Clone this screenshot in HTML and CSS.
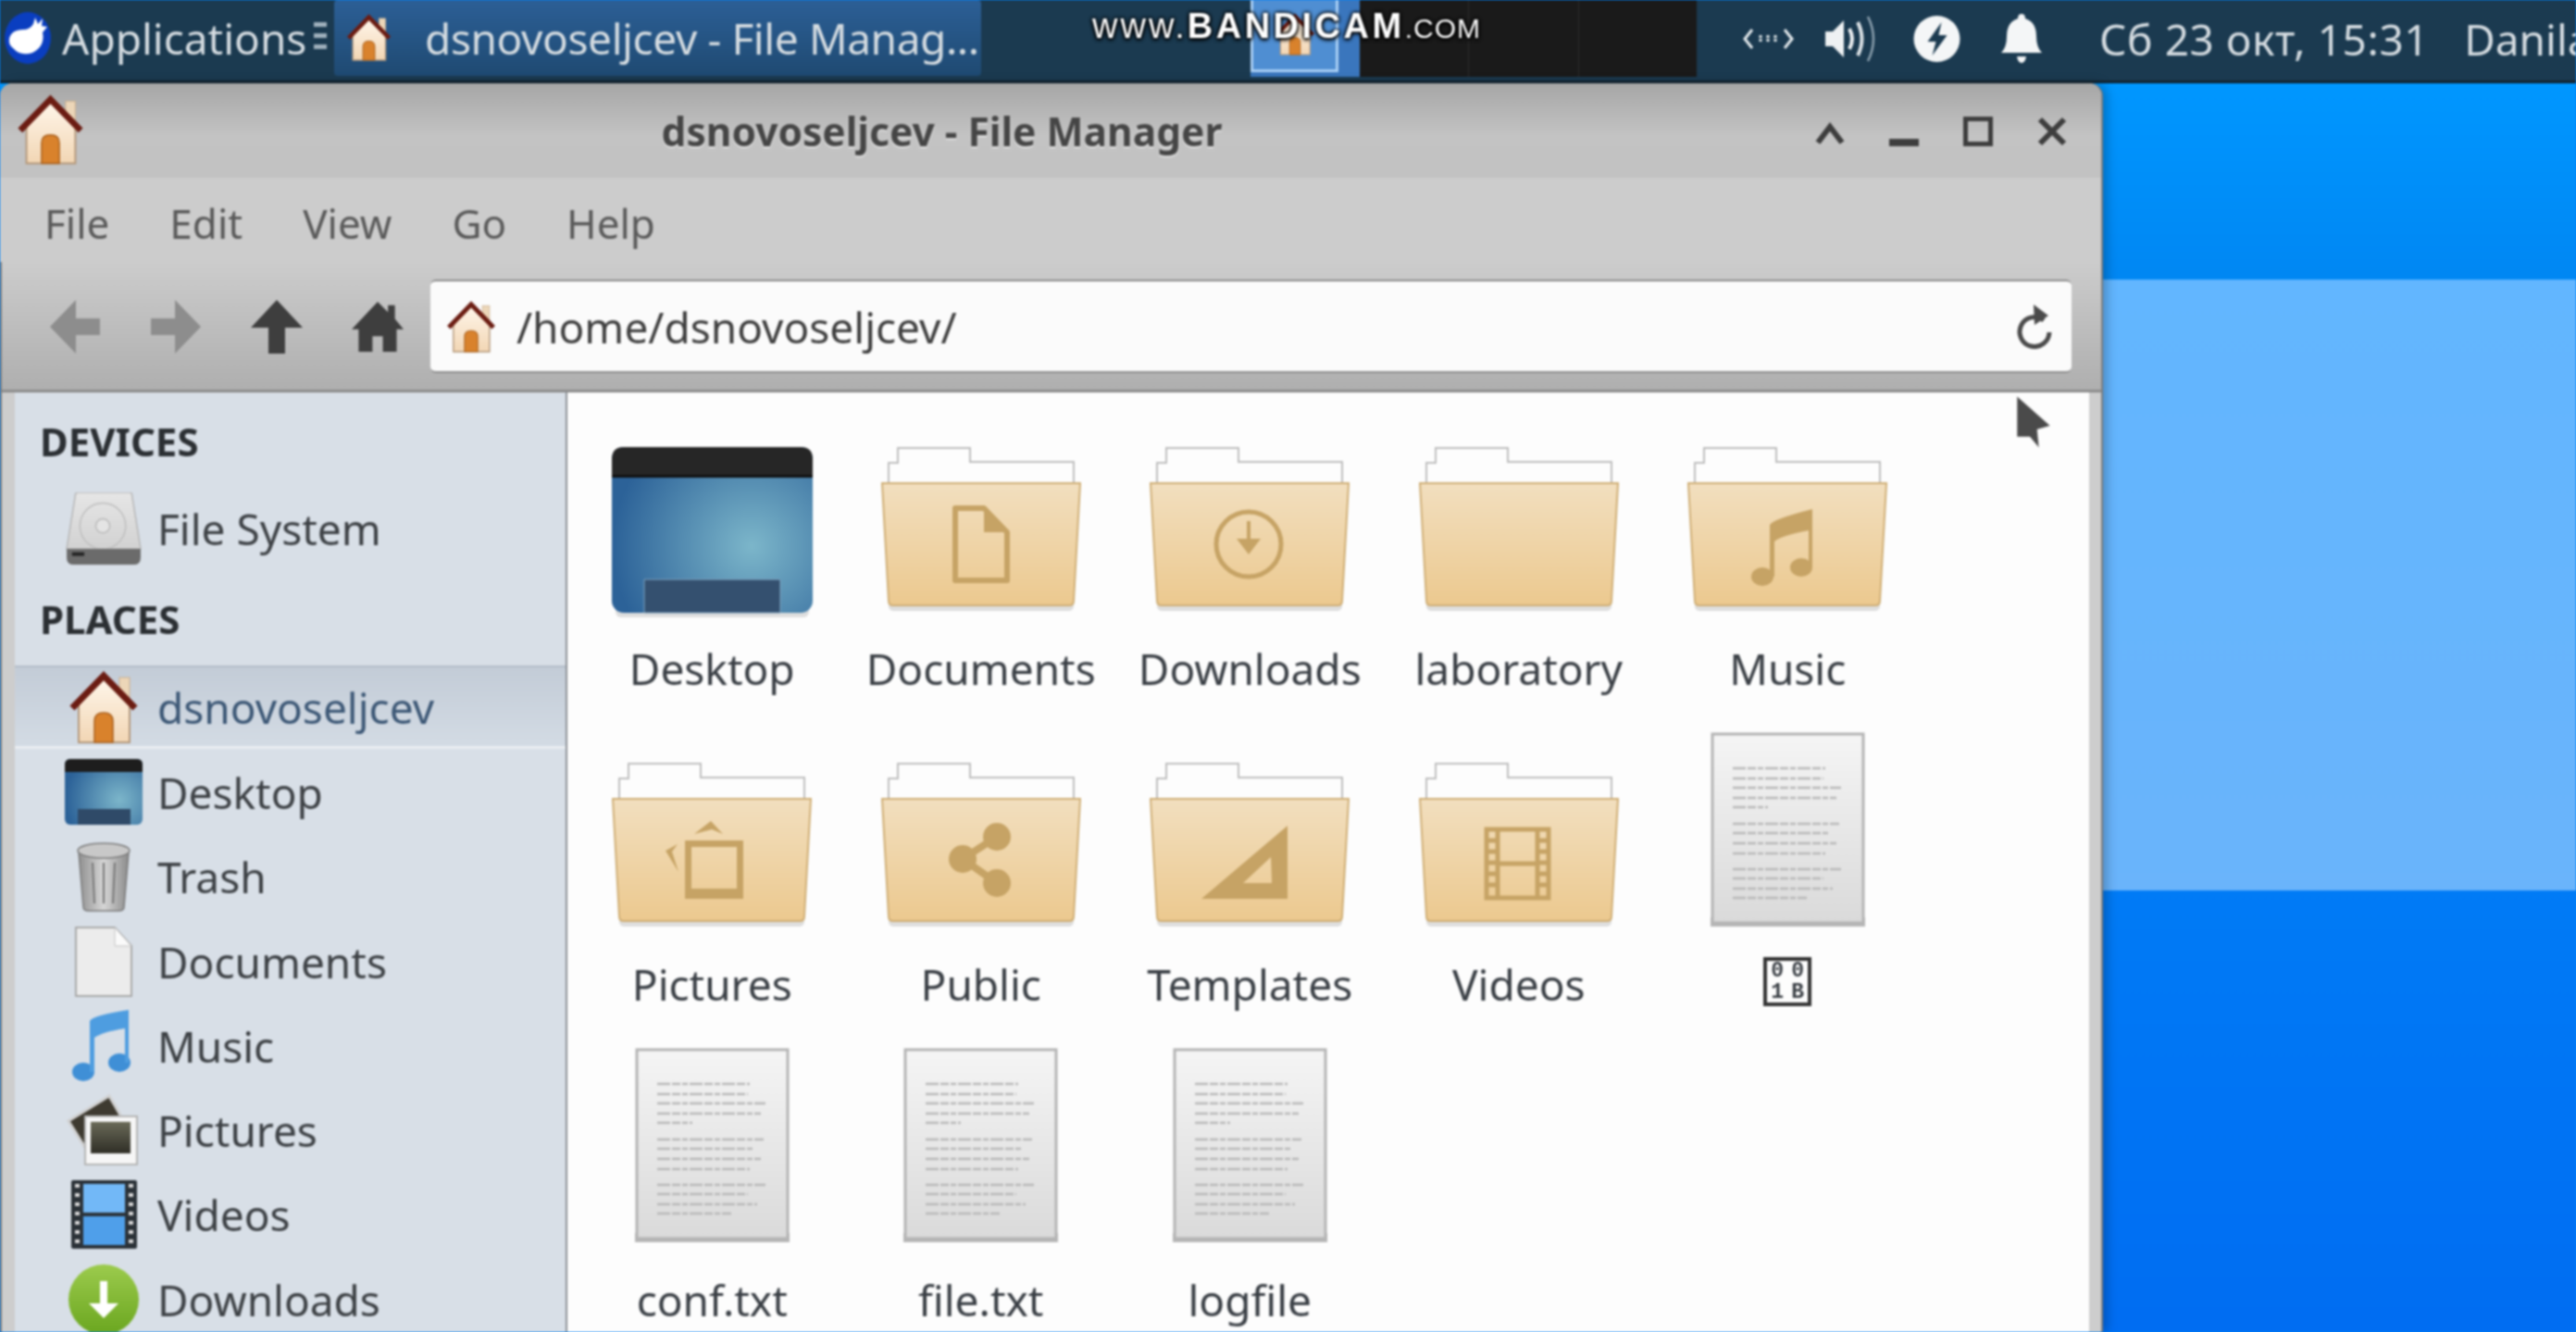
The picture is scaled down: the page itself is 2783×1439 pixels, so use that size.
FILE: index.html

```html
<!DOCTYPE html>
<html lang="en">
<head>
    <meta charset="UTF-8">
    <meta name="viewport" content="width=device-width, initial-scale=1.0">
    <title>dsnovoseljcev - File Manager</title>
    <link rel="stylesheet" href="styles.css">
</head>
<body>
    <!-- shared icons -->
    <svg class="defs" width="0" height="0">
        <defs>
            <linearGradient id="gFolder" x1="0" y1="0" x2="0" y2="1">
                <stop offset="0" stop-color="#f2dfbf"/>
                <stop offset="1" stop-color="#ecc98f"/>
            </linearGradient>
            <linearGradient id="gDoc" x1="0" y1="0" x2="0" y2="1">
                <stop offset="0" stop-color="#f5f5f5"/>
                <stop offset="1" stop-color="#dadada"/>
            </linearGradient>
            <linearGradient id="gWall" x1="0" y1="0" x2="0" y2="1">
                <stop offset="0" stop-color="#fff6ea"/>
                <stop offset="1" stop-color="#f2d6b4"/>
            </linearGradient>
            <linearGradient id="gHdd" x1="0" y1="0" x2="0" y2="1">
                <stop offset="0" stop-color="#e6e6e6"/>
                <stop offset="1" stop-color="#d2d2d2"/>
            </linearGradient>
            <linearGradient id="gTrash" x1="0" y1="0" x2="1" y2="0">
                <stop offset="0" stop-color="#8f8f8f"/>
                <stop offset="0.5" stop-color="#d6d6d6"/>
                <stop offset="1" stop-color="#8a8a8a"/>
            </linearGradient>
            <linearGradient id="gGreen" x1="0" y1="0" x2="0" y2="1">
                <stop offset="0" stop-color="#9ccb4d"/>
                <stop offset="1" stop-color="#6aa61f"/>
            </linearGradient>
            <linearGradient id="gPhoto" x1="0" y1="0" x2="0" y2="1">
                <stop offset="0" stop-color="#6a6a58"/>
                <stop offset="1" stop-color="#2f2e26"/>
            </linearGradient>
            <radialGradient id="gDesk" gradientUnits="userSpaceOnUse" cx="151" cy="107" r="150">
                <stop offset="0" stop-color="#7cb6ca"/>
                <stop offset="1" stop-color="#2c6298"/>
            </radialGradient>
            <radialGradient id="gDeskSm" gradientUnits="userSpaceOnUse" cx="59" cy="44" r="58">
                <stop offset="0" stop-color="#7cb6ca"/>
                <stop offset="1" stop-color="#2c6298"/>
            </radialGradient>

            <symbol id="home" viewBox="0 0 76 78">
                <rect x="55" y="7" width="11" height="24" fill="#ecd6b8" stroke="#c9ad8c" stroke-width="1"/>
                <path d="M11 34 L38 8 L66 34 V77 H11 Z" fill="url(#gWall)" stroke="#b3977a" stroke-width="2"/>
                <path d="M28 77 V54 Q28 45 38 45 Q48 45 48 54 V77 Z" fill="#d9822c" stroke="#a9601e" stroke-width="1.5"/>
                <path d="M4 40 L38 5 L72 40" fill="none" stroke="#6b1c12" stroke-width="7" stroke-linejoin="miter"/>
            </symbol>

            <symbol id="folder" viewBox="0 0 216 179">
                <rect x="8" y="164" width="200" height="13" rx="5" fill="#000" opacity="0.12"/>
                <path d="M8 40 V17 H18 V1 H96 V16 H208 V40 Z" fill="#fdfdfd" stroke="#bdbdbd" stroke-width="2"/>
                <path d="M1 39 H215 L208 166 Q208 171 203 171 H13 Q8 171 8 166 Z" fill="url(#gFolder)" stroke="#cfae75" stroke-width="2"/>
            </symbol>
            <symbol id="emb-doc" viewBox="0 0 216 179">
                <path d="M80 66 H111 L136 92 V144 H80 Z" fill="none" stroke="#c6a365" stroke-width="6" stroke-linejoin="round"/>
                <path d="M111 66 L136 92 H111 Z" fill="#c6a365"/>
            </symbol>
            <symbol id="emb-down" viewBox="0 0 216 179">
                <circle cx="107" cy="105" r="35" fill="none" stroke="#c6a365" stroke-width="5"/>
                <path d="M105 80 h4 v19 h11 l-13 17 l-13 -17 h11 Z" fill="#c6a365"/>
            </symbol>
            <symbol id="emb-music" viewBox="0 0 216 179">
                <ellipse cx="81" cy="140" rx="12" ry="10" fill="#c6a365"/>
                <ellipse cx="123" cy="130" rx="12" ry="10" fill="#c6a365"/>
                <path d="M89 140 V84 Q92 78 135 67 V130 H131 V90 Q100 96 94 102 V140 Z" fill="#c6a365"/>
            </symbol>
            <symbol id="emb-pictures" viewBox="0 0 216 179">
                <path d="M79 84 H142 V147 H79 Z M86 91 V136 H135 V91 Z" fill="#c6a365" fill-rule="evenodd"/>
                <path d="M89 77 L107 63 L120 77 L108 72 Z" fill="#c6a365"/>
                <path d="M71 88 L58 95 L72 118 L65 96 Z" fill="#c6a365"/>
            </symbol>
            <symbol id="emb-share" viewBox="0 0 216 179">
                <path d="M125 80 L88 104 L125 130" fill="none" stroke="#c6a365" stroke-width="8"/>
                <circle cx="125" cy="80" r="15" fill="#c6a365"/>
                <circle cx="88" cy="104" r="15" fill="#c6a365"/>
                <circle cx="125" cy="130" r="15" fill="#c6a365"/>
            </symbol>
            <symbol id="emb-templates" viewBox="0 0 216 179">
                <path d="M149 68 V147 H56 Z M131 102 L101 130 H132 Z" fill="#c6a365" fill-rule="evenodd"/>
            </symbol>
            <symbol id="emb-film" viewBox="0 0 216 179">
                <g fill="none" stroke="#c6a365" stroke-width="5">
                    <rect x="73" y="72" width="67" height="74"/>
                    <path d="M85 72 V146 M128 72 V146 M85 109 H128 M73 84 H85 M73 96 H85 M73 108 H85 M73 120 H85 M73 132 H85 M128 84 H140 M128 96 H140 M128 108 H140 M128 120 H140 M128 132 H140"/>
                </g>
            </symbol>

            <symbol id="textdoc" viewBox="0 0 167 212">
                <rect x="0" y="200" width="167" height="10" fill="#000" opacity="0.28"/>
                <rect x="2" y="2" width="163" height="204" fill="url(#gDoc)" stroke="#b4b4b4" stroke-width="3"/>
                <g stroke="#b9b9b9" stroke-width="2.500" stroke-dasharray="14 2 9 2 6 2" fill="none">
                    <path d="M24 39 H124 M24 50 H122 M24 60 H141 M24 71 H136 M24 81 H62"/>
                    <path d="M24 99 H139 M24 109 H129 M24 120 H136 M24 131 H124"/>
                    <path d="M24 148 H141 M24 158 H122 M24 169 H132 M24 179 H104"/>
                </g>
            </symbol>

            <symbol id="desktop-big" viewBox="0 0 217 186">
                <rect x="4" y="172" width="209" height="12" rx="6" fill="#000" opacity="0.12"/>
                <rect x="0" y="0" width="217" height="179" rx="13" fill="url(#gDesk)"/>
                <path d="M0 32 V13 Q0 0 13 0 H204 Q217 0 217 13 V32 Z" fill="#262626"/>
                <rect x="0" y="30" width="217" height="3" fill="#111"/>
                <path d="M35 143 H182 V179 H35 Z" fill="#34506f" stroke="#7fa3c0" stroke-width="1"/>
            </symbol>
            <symbol id="desktop-small" viewBox="0 0 84 72">
                <rect x="0" y="0" width="84" height="71" rx="6" fill="url(#gDeskSm)"/>
                <path d="M0 14 V6 Q0 0 6 0 H78 Q84 0 84 6 V14 Z" fill="#1d1d1d"/>
                <path d="M14 54 H71 V71 H14 Z" fill="#2f4a68"/>
            </symbol>
        </defs>
    </svg>

    <div class="screen">
        <!-- top panel -->
        <div class="panel">
            <svg class="app-logo" viewBox="0 0 50 56">
                <ellipse cx="25" cy="28" rx="25" ry="28" fill="#0a3ec0"/>
                <path d="M5 29 Q7 19 20 19 Q27 19 31 13 L33 6 L36 13 L41 7 L40 15 L46 16 L41 22 Q44 37 30 44 Q17 48 9 39 Q4 35 5 29 Z" fill="#fff"/>
            </svg>
            <span class="panel-text app-label">Applications</span>
            <span class="panel-grip"></span>
            <div class="task">
                <svg class="task-icon"><use href="#home"/></svg>
                <span class="panel-text task-text">dsnovoseljcev - File Manag...</span>
            </div>
            <div class="pager">
                <div class="ws ws-active">
                    <div class="ws-win"><svg class="ws-icon"><use href="#home"/></svg></div>
                </div>
                <div class="ws ws-2"></div>
                <div class="ws ws-3"></div>
                <div class="ws ws-4"></div>
            </div>
            <div class="tray">
                <svg class="tray-net" viewBox="0 0 57 24">
                    <path d="M11 2 L3 12 L11 22 M46 2 L54 12 L46 22" fill="none" stroke="#e6ebee" stroke-width="3"/>
                    <path d="M20 8 V16 M28 8 V16 M36 8 V16" stroke="#e6ebee" stroke-width="3" stroke-dasharray="3 1"/>
                </svg>
                <svg class="tray-vol" viewBox="0 0 55 50">
                    <path d="M0 17 H8 L20 5 V45 L8 33 H0 Z" fill="#eef1f3"/>
                    <path d="M26 14 Q32 25 26 36" fill="none" stroke="#eef1f3" stroke-width="4"/>
                    <path d="M35 7 Q44 25 35 43" fill="none" stroke="#dde3e7" stroke-width="4"/>
                    <path d="M46 1 Q58 25 46 49" fill="none" stroke="#8ea2b0" stroke-width="2.5"/>
                </svg>
                <svg class="tray-power" viewBox="0 0 50 50">
                    <circle cx="25" cy="25" r="25" fill="#f4f6f7"/>
                    <path d="M30 7 L15 28 H24 L20 43 L36 21 H27 Z" fill="#1b3a50"/>
                </svg>
                <svg class="tray-bell" viewBox="0 0 44 53">
                    <path d="M22 0 Q26 0 26 5 Q38 9 38 24 Q38 36 44 42 H0 Q6 36 6 24 Q6 9 18 5 Q18 0 22 0 Z" fill="#f4f6f7"/>
                    <path d="M17 46 H27 Q26 53 22 53 Q18 53 17 46 Z" fill="#f4f6f7"/>
                </svg>
                <span class="panel-text clock">Сб 23 окт, 15:31</span>
                <span class="panel-text user">Danila</span>
            </div>
            <div class="watermark">www.<b>BANDICAM</b><small>.COM</small></div>
        </div>

        <div class="desktop">
            <div class="window">
                <div class="titlebar">
                    <svg class="title-icon"><use href="#home"/></svg>
                    <div class="title">dsnovoseljcev - File Manager</div>
                    <div class="win-buttons">
                        <svg viewBox="0 0 32 32"><path d="M3 28 L16 11 L29 28" fill="none" stroke="#3d3d3d" stroke-width="6"/></svg>
                        <svg viewBox="0 0 32 32"><rect x="0" y="24" width="32" height="8" fill="#3d3d3d"/></svg>
                        <svg viewBox="0 0 32 32"><rect x="2.5" y="2.5" width="27" height="27" fill="none" stroke="#3d3d3d" stroke-width="5"/></svg>
                        <svg viewBox="0 0 32 32"><path d="M3 3 L29 29 M29 3 L3 29" fill="none" stroke="#3d3d3d" stroke-width="6"/></svg>
                    </div>
                </div>

                <div class="menubar">
                    <span>File</span>
                    <span>Edit</span>
                    <span>View</span>
                    <span>Go</span>
                    <span>Help</span>
                </div>

                <div class="toolbar">
                    <div class="tool-btn">
                        <svg viewBox="0 0 56 58"><path d="M0 29 L28 0 V20 H54 V38 H28 V58 Z" fill="#8d8d8d"/></svg>
                    </div>
                    <div class="tool-btn">
                        <svg viewBox="0 0 56 58"><path d="M54 29 L26 0 V20 H0 V38 H26 V58 Z" fill="#8d8d8d"/></svg>
                    </div>
                    <div class="tool-btn">
                        <svg viewBox="0 0 56 58"><path d="M28 0 L56 30 H37 V58 H19 V30 H0 Z" fill="#3e3e3e"/></svg>
                    </div>
                    <div class="tool-btn">
                        <svg viewBox="0 0 60 58"><path d="M30 0 L42 12 V4 H50 V20 L60 32 H52 V58 H36 V40 H24 V58 H8 V32 H0 Z" fill="#3e3e3e"/></svg>
                    </div>
                    <div class="location">
                        <svg class="loc-icon"><use href="#home"/></svg>
                        <span class="loc-text">/home/dsnovoseljcev/</span>
                        <svg class="loc-reload" viewBox="0 0 40 48">
                            <path d="M30 17 A16 16 0 1 0 36 30" fill="none" stroke="#4a4a4a" stroke-width="5"/>
                            <path d="M19 0 L35 12 L20 22 Z" fill="#4a4a4a"/>
                        </svg>
                    </div>
                </div>

                <div class="content">
                    <div class="sidebar">
                        <div class="side-head first">DEVICES</div>
                        <div class="side-row">
                            <svg class="side-icon" viewBox="0 0 84 82">
                                <path d="M10 2 Q10 0 13 0 H71 Q74 0 74 2 L84 64 H0 Z" fill="url(#gHdd)" stroke="#b5b5b5" stroke-width="1.5"/>
                                <circle cx="41" cy="38" r="26" fill="none" stroke="#bdbdbd" stroke-width="1.5"/>
                                <circle cx="41" cy="38" r="8" fill="#e4e4e4" stroke="#b8b8b8" stroke-width="1.5"/>
                                <path d="M0 64 H84 V74 Q84 82 76 82 H8 Q0 82 0 74 Z" fill="#6b6b6b"/>
                                <rect x="6" y="68" width="14" height="4" fill="#222"/>
                            </svg>
                            <span>File System</span>
                        </div>
                        <div class="side-head places">PLACES</div>
                        <div class="side-row selected">
                            <svg class="side-icon"><use href="#home"/></svg>
                            <span>dsnovoseljcev</span>
                        </div>
                        <div class="side-row">
                            <svg class="side-icon"><use href="#desktop-small"/></svg>
                            <span>Desktop</span>
                        </div>
                        <div class="side-row">
                            <svg class="side-icon" viewBox="0 0 84 74">
                                <path d="M15 11 H69 L64 70 Q64 74 58 74 H26 Q20 74 20 70 Z" fill="url(#gTrash)" stroke="#7c7c7c" stroke-width="1.5"/>
                                <ellipse cx="42" cy="9" rx="28" ry="8" fill="#c8c8c8" stroke="#7c7c7c" stroke-width="1.5"/>
                                <path d="M30 22 L32 66 M42 22 V66 M54 22 L52 66" stroke="#777" stroke-width="2"/>
                            </svg>
                            <span>Trash</span>
                        </div>
                        <div class="side-row">
                            <svg class="side-icon" viewBox="0 0 84 76">
                                <path d="M12 1 H54 L72 21 V75 H12 Z" fill="#ececec" stroke="#a9a9a9" stroke-width="2"/>
                                <path d="M54 1 V21 H72 Z" fill="#fafafa" stroke="#c4c4c4" stroke-width="1"/>
                            </svg>
                            <span>Documents</span>
                        </div>
                        <div class="side-row">
                            <svg class="side-icon" viewBox="0 0 84 78">
                                <ellipse cx="20" cy="67" rx="12" ry="10" fill="#3f8fd6"/>
                                <ellipse cx="59" cy="57" rx="12" ry="10" fill="#3f8fd6"/>
                                <path d="M27 67 V12 Q30 6 69 0 V57 H65 V20 Q40 24 32 30 V67 Z" fill="#4e9de0"/>
                            </svg>
                            <span>Music</span>
                        </div>
                        <div class="side-row">
                            <svg class="side-icon" viewBox="0 0 84 76">
                                <path d="M4 28 L48 1 L66 32 L24 60 Z" fill="#3e3a30" stroke="#d0d0d0" stroke-width="3"/>
                                <rect x="22" y="23" width="56" height="52" fill="#f6f6f6" stroke="#b4b4b4" stroke-width="2"/>
                                <rect x="28" y="29" width="43" height="34" fill="url(#gPhoto)"/>
                            </svg>
                            <span>Pictures</span>
                        </div>
                        <div class="side-row">
                            <svg class="side-icon" viewBox="0 0 84 74">
                                <rect x="7" y="0" width="71" height="74" rx="2" fill="#2b3238"/>
                                <rect x="20" y="4" width="45" height="31" fill="#72b8f7"/>
                                <rect x="20" y="39" width="45" height="31" fill="#4f9fea"/>
                                <path d="M13.500 4 V70 M71.500 4 V70" stroke="#d8d8d8" stroke-width="5" stroke-dasharray="4 6"/>
                            </svg>
                            <span>Videos</span>
                        </div>
                        <div class="side-row">
                            <svg class="side-icon" viewBox="0 0 84 76">
                                <circle cx="42" cy="38" r="38" fill="url(#gGreen)"/>
                                <path d="M38 18 H46 V42 H58 L42 58 L26 42 H38 Z" fill="#fff"/>
                            </svg>
                            <span>Downloads</span>
                        </div>
                    </div>

                    <div class="main">
                        <div class="item">
                            <div class="item-icon"><svg class="ic-desktop"><use href="#desktop-big"/></svg></div>
                            <div class="item-label">Desktop</div>
                        </div>
                        <div class="item">
                            <div class="item-icon"><svg class="ic-folder"><use href="#folder"/><use href="#emb-doc"/></svg></div>
                            <div class="item-label">Documents</div>
                        </div>
                        <div class="item">
                            <div class="item-icon"><svg class="ic-folder"><use href="#folder"/><use href="#emb-down"/></svg></div>
                            <div class="item-label">Downloads</div>
                        </div>
                        <div class="item">
                            <div class="item-icon"><svg class="ic-folder"><use href="#folder"/></svg></div>
                            <div class="item-label">laboratory</div>
                        </div>
                        <div class="item">
                            <div class="item-icon"><svg class="ic-folder"><use href="#folder"/><use href="#emb-music"/></svg></div>
                            <div class="item-label">Music</div>
                        </div>

                        <div class="item">
                            <div class="item-icon"><svg class="ic-folder"><use href="#folder"/><use href="#emb-pictures"/></svg></div>
                            <div class="item-label">Pictures</div>
                        </div>
                        <div class="item">
                            <div class="item-icon"><svg class="ic-folder"><use href="#folder"/><use href="#emb-share"/></svg></div>
                            <div class="item-label">Public</div>
                        </div>
                        <div class="item">
                            <div class="item-icon"><svg class="ic-folder"><use href="#folder"/><use href="#emb-templates"/></svg></div>
                            <div class="item-label">Templates</div>
                        </div>
                        <div class="item">
                            <div class="item-icon"><svg class="ic-folder"><use href="#folder"/><use href="#emb-film"/></svg></div>
                            <div class="item-label">Videos</div>
                        </div>
                        <div class="item">
                            <div class="item-icon"><svg class="ic-doc"><use href="#textdoc"/></svg></div>
                            <div class="item-label">
                                <div class="tofu"><span>0</span><span>0</span><span>1</span><span>B</span></div>
                            </div>
                        </div>

                        <div class="item">
                            <div class="item-icon"><svg class="ic-doc"><use href="#textdoc"/></svg></div>
                            <div class="item-label">conf.txt</div>
                        </div>
                        <div class="item">
                            <div class="item-icon"><svg class="ic-doc"><use href="#textdoc"/></svg></div>
                            <div class="item-label">file.txt</div>
                        </div>
                        <div class="item">
                            <div class="item-icon"><svg class="ic-doc"><use href="#textdoc"/></svg></div>
                            <div class="item-label">logfile</div>
                        </div>
                    </div>
                </div>

                <svg class="cursor" viewBox="0 0 40 62">
                    <path d="M2 2 L38 34 L24 38 L26 58 L16 46 L2 46 Z" fill="#4a4a4a" stroke="#fff" stroke-width="1" stroke-opacity="0.5"/>
                </svg>
            </div>
        </div>
    </div>
</body>
</html>
```

FILE: styles.css

```css
html, body {
    margin: 0;
    padding: 0;
    height: 100%;
    overflow: hidden;
    background: #0080f5;
}

.defs {
    position: absolute;
}

/* the capture is an upscaled video frame, everything is a bit soft */
.screen {
    width: 2783px;
    height: 1439px;
    display: flex;
    flex-direction: column;
    overflow: hidden;
    font-family: "Noto Sans", sans-serif;
    font-size: 46px;
    filter: blur(1.1px);
}

/* ---- panel ---- */
.panel {
    position: relative;
    flex: 0 0 90px;
    box-sizing: border-box;
    height: 90px;
    padding-bottom: 4px;
    display: flex;
    align-items: stretch;
    background: #1b3a50;
    border-bottom: 3px solid #10222f;
    white-space: nowrap;
}

.panel > * {
    flex: none;
}

.panel-text {
    color: #d5dce1;
    font-size: 46px;
    line-height: 82px;
}

.app-logo {
    width: 50px;
    height: 56px;
    margin: 13px 0 0 5px;
}

.app-label {
    width: 261px;
    margin-left: 12px;
}

.panel-grip {
    width: 14px;
    height: 34px;
    margin: 24px 8px 0 11px;
    background: repeating-linear-gradient(to bottom, #9fb0bc 0 5px, transparent 5px 12px);
}

.task {
    width: 699px;
    display: flex;
    background: linear-gradient(to bottom, #2c5f96, #1f4a72);
    border-radius: 4px;
    margin-bottom: 1px;
}

.task-icon {
    width: 49px;
    height: 55px;
    flex: none;
    margin: 13px 36px 0 13px;
}

.task-text {
    letter-spacing: -0.4px;
}

.pager {
    width: 482px;
    margin-left: 291px;
    display: flex;
    background: #1a1a1a;
}

.ws {
    flex: none;
    box-sizing: border-box;
    border-right: 1px solid #2c2c2c;
}

.ws-active {
    width: 118px;
    background: #3a76bd;
    border-right: none;
}

.ws-win {
    width: 95px;
    height: 78px;
    box-sizing: border-box;
    background: #4f8ed2;
    border: 3px solid #a9cff5;
    border-top: none;
    display: flex;
    justify-content: center;
}

.ws-icon {
    width: 44px;
    height: 50px;
    margin-top: 12px;
}

.ws-2 {
    width: 118px;
}

.ws-3 {
    width: 119px;
}

.ws-4 {
    width: 127px;
    border-right: none;
}

.tray {
    display: flex;
    align-items: center;
    margin-left: 49px;
}

.tray > * {
    flex: none;
}

.tray-net {
    width: 57px;
    height: 24px;
}

.tray-vol {
    width: 55px;
    height: 50px;
    margin-left: 33px;
}

.tray-power {
    width: 51px;
    height: 50px;
    margin-left: 40px;
}

.tray-bell {
    width: 44px;
    height: 53px;
    margin-left: 44px;
}

.clock {
    margin-left: 62px;
    letter-spacing: 0.6px;
}

.user {
    margin-left: 38px;
}

/* recorder watermark sits over the panel */
.watermark {
    position: absolute;
    left: 1180px;
    top: 6px;
    color: #fff;
    font-family: "Liberation Sans", sans-serif;
    font-size: 38px;
    letter-spacing: 3px;
    line-height: 44px;
    text-shadow: 0 0 4px #000, 0 0 4px #000, 0 2px 4px #000;
}

.watermark b {
    font-size: 38px;
    letter-spacing: 3.5px;
}

.watermark small {
    font-size: 30px;
    font-weight: normal;
    letter-spacing: 1px;
}

/* ---- desktop ---- */
.desktop {
    flex: 1;
    min-height: 0;
    background: linear-gradient(to bottom, #0097ff 0, #0087f3 212px, #62b6ff 212px, #6ab4fb 872px, #007bf6 872px, #006df2 100%);
}

.window {
    position: relative;
    width: 2270px;
    height: 100%;
    display: flex;
    flex-direction: column;
    background: #cdcdcd;
    border-radius: 14px 14px 0 0;
    box-shadow: 2px 0 0 #7d7d7d, 6px 0 12px rgba(0, 0, 0, 0.25), inset 2px 0 0 #7d7d7d;
}

.titlebar {
    flex: 0 0 102px;
    display: flex;
    align-items: center;
    padding: 0 37px 0 18px;
    border-radius: 14px 14px 0 0;
    background: linear-gradient(to bottom, #a6a6a6, #c3c3c3 55%, #c2c2c2);
}

.title-icon {
    width: 73px;
    height: 76px;
    flex: none;
    margin-top: -2px;
}

.title {
    flex: 1;
    padding-right: 17px;
    text-align: center;
    color: #454545;
    font-size: 42.500px;
    font-weight: bold;
    text-shadow: 0 2px 2px rgba(255, 255, 255, 0.5);
}

.win-buttons {
    display: flex;
    gap: 48px;
    margin-top: 2px;
}

.win-buttons svg {
    width: 32px;
    height: 32px;
}

.menubar {
    flex: 0 0 91px;
    box-sizing: border-box;
    display: flex;
    align-items: center;
    padding: 7px 0 0 48px;
    background: #cccccc;
    color: #5a5a5a;
    font-size: 44px;
}

.menubar span {
    margin-right: 65px;
}

.toolbar {
    flex: 0 0 141px;
    box-sizing: border-box;
    display: flex;
    padding: 19px 32px 18px 26px;
    margin-left: 2px;
    background: linear-gradient(to bottom, #cccccc, #afafaf);
    border-bottom: 3px solid #8c8c8c;
}

.tool-btn {
    width: 108.500px;
    display: flex;
    align-items: center;
    justify-content: center;
}

.tool-btn svg {
    width: 56px;
    height: 58px;
}

.location {
    flex: 1;
    margin-left: 3px;
    display: flex;
    align-items: center;
    padding: 0 20px 0 17px;
    background: #fbfbfb;
    border-radius: 6px;
    border-top: 2px solid #8b8b8b;
    border-bottom: 2px solid #8f8f8f;
    box-sizing: border-box;
}

.loc-icon {
    width: 54px;
    height: 56px;
    flex: none;
}

.loc-text {
    flex: 1;
    margin-left: 22px;
    color: #3f3f3f;
    font-size: 46px;
}

.loc-reload {
    width: 40px;
    height: 48px;
}

/* ---- content ---- */
.content {
    flex: 1;
    min-height: 0;
    display: flex;
    margin: 0 13px 0 16px;
    overflow: hidden;
}

.sidebar {
    width: 595px;
    flex: none;
    padding-top: 7px;
    background: #d8dfe7;
    border-right: 2px solid #8b8f94;
    color: #3d4145;
}

.side-head {
    height: 91px;
    line-height: 91px;
    padding-left: 27px;
    font-size: 42px;
    font-weight: bold;
    color: #2b2f33;
}

.side-head.first {
    margin-bottom: 3px;
}

.side-head.places {
    margin-top: 7px;
    margin-bottom: 5px;
}

.side-row {
    height: 91.300px;
    display: flex;
    align-items: center;
    gap: 16px;
    padding-left: 54px;
}

.side-row.selected {
    height: 90px;
    margin-bottom: 1px;
    background: linear-gradient(to bottom, #c3ccd7, #d3dbe4);
    border-top: 2px solid #b4bdc8;
    border-bottom: 3px solid #e9edf1;
    box-sizing: border-box;
    color: #3d5876;
}

.side-icon {
    width: 84px;
    height: 78px;
    flex: none;
}

.main {
    flex: 1;
    display: grid;
    grid-template-columns: repeat(5, 290.500px);
    grid-auto-rows: 300px;
    row-gap: 41px;
    align-content: start;
    padding: 29px 0 0 11px;
    background: #fdfdfd;
    color: #3a3f45;
}

.item {
    display: flex;
    flex-direction: column;
    align-items: center;
}

.item-icon {
    height: 209px;
    display: flex;
    align-items: flex-end;
    justify-content: center;
}

.ic-folder {
    width: 216px;
    height: 179px;
}

.ic-desktop {
    width: 217px;
    height: 186px;
    margin-bottom: -7px;
}

.ic-doc {
    width: 167px;
    height: 212px;
}

.item-label {
    height: 62px;
    line-height: 62px;
    margin-top: 29px;
}

.tofu {
    width: 52px;
    height: 53px;
    box-sizing: border-box;
    margin-top: 2px;
    border: 4px solid #333;
    display: grid;
    grid-template-columns: 1fr 1fr;
    justify-items: center;
    align-items: center;
    font-family: "Liberation Mono", monospace;
    font-size: 23px;
    font-weight: bold;
    line-height: 22px;
    color: #3a3f45;
}

/* mouse pointer over the window */
.cursor {
    position: absolute;
    left: 2177px;
    top: 336px;
    width: 40px;
    height: 62px;
}
```
